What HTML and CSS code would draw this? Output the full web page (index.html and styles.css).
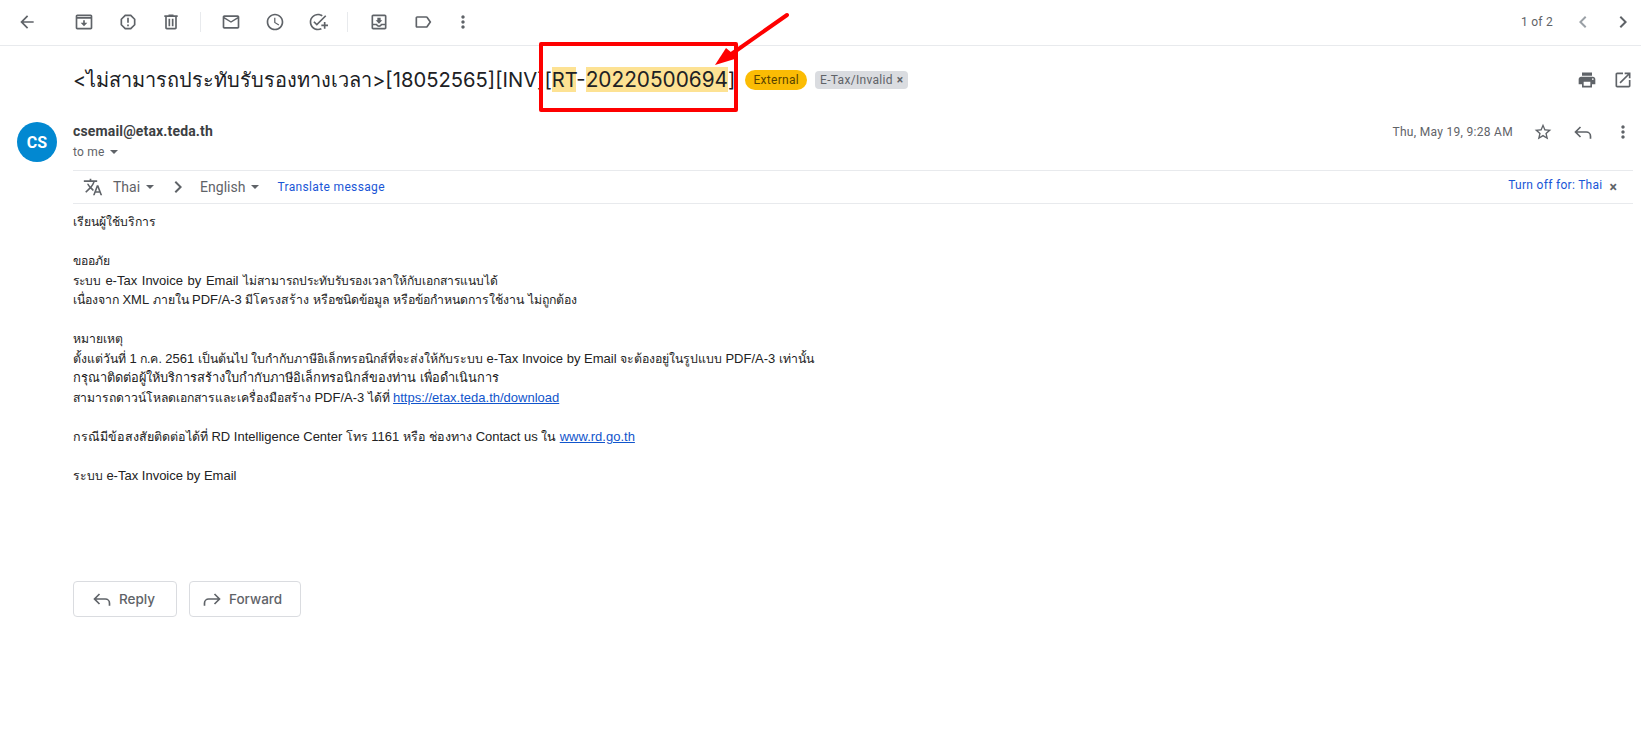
FILE: index.html
```html
<!DOCTYPE html>
<html lang="en">
<head>
<meta charset="utf-8">
<title>Mail</title>
<link rel="stylesheet" href="styles.css">
</head>
<body>
<svg class="sprite" width="0" height="0">
  <defs>
    <symbol id="i-back" viewBox="0 0 24 24"><path d="M20 11H7.83l5.59-5.59L12 4l-8 8 8 8 1.41-1.41L7.83 13H20v-2z"/></symbol>
    <symbol id="i-archive" viewBox="0 0 24 24"><path d="M20 3H4c-1.1 0-2 .9-2 2v14c0 1.1.9 2 2 2h16c1.1 0 2-.9 2-2V5c0-1.1-.9-2-2-2zm0 16H4V8h16v11zM20 6H4V5h16v1zM16 13h-3v-3h-2v3H8l4 4z"/></symbol>
    <symbol id="i-spam" viewBox="0 0 24 24"><path d="M15.73 3H8.27L3 8.27v7.46L8.27 21h7.46L21 15.73V8.27L15.73 3zM19 14.9L14.9 19H9.1L5 14.9V9.1L9.1 5h5.8L19 9.1v5.8zM11 7h2v6h-2zM11 15h2v2h-2z"/></symbol>
    <symbol id="i-delete" viewBox="0 0 24 24"><path d="M15 4V3H9v1H4v2h1v13c0 1.1.9 2 2 2h10c1.1 0 2-.9 2-2V6h1V4h-5zm2 15H7V6h10v13zM9 8h2v9H9zm4 0h2v9h-2z"/></symbol>
    <symbol id="i-mail" viewBox="0 0 24 24"><path d="M20 4H4c-1.1 0-2 .9-2 2v12c0 1.1.9 2 2 2h16c1.1 0 2-.9 2-2V6c0-1.1-.9-2-2-2zm0 14H4V8l8 5 8-5v10zm-8-7L4 6h16l-8 5z"/></symbol>
    <symbol id="i-clock" viewBox="0 0 24 24"><path d="M11.99 2C6.47 2 2 6.48 2 12s4.47 10 9.99 10C17.52 22 22 17.52 22 12S17.52 2 11.99 2zM12 20c-4.42 0-8-3.58-8-8s3.58-8 8-8 8 3.58 8 8-3.58 8-8 8zm.5-13H11v6l5.25 3.15.75-1.23-4.5-2.67z"/></symbol>
    <symbol id="i-task" viewBox="0 0 24 24"><path d="M22 5.18L10.59 16.6l-4.24-4.24 1.41-1.41 2.83 2.83 10-10L22 5.18zM12 20c-4.41 0-8-3.59-8-8s3.59-8 8-8c1.57 0 3.04.46 4.28 1.25l1.45-1.45C16.1 2.67 14.13 2 12 2 6.48 2 2 6.48 2 12s4.48 10 10 10c1.73 0 3.36-.44 4.78-1.22l-1.5-1.5c-1 .46-2.11.72-3.28.72zm7-5h-3v2h3v3h2v-3h3v-2h-3v-3h-2v3z"/></symbol>
    <symbol id="i-move" viewBox="0 0 24 24"><path d="M19 3H5c-1.1 0-2 .9-2 2v14c0 1.1.9 2 2 2h14c1.1 0 2-.9 2-2V5c0-1.1-.9-2-2-2zm0 16H5v-3h3.56c.69 1.19 1.97 2 3.45 2s2.75-.81 3.45-2H19v3zm0-5h-4.99c0 1.1-.9 2-2 2s-2-.9-2-2H5V5h14v9zM16 10h-2V7h-4v3H8l4 4z"/></symbol>
    <symbol id="i-label" viewBox="0 0 24 24"><path d="M17.63 5.84C17.27 5.33 16.67 5 16 5L5 5.01C3.9 5.01 3 5.9 3 7v10c0 1.1.9 1.99 2 1.99L16 19c.67 0 1.27-.33 1.63-.84L22 12l-4.37-6.16zM16 17H5V7h11l3.55 5L16 17z"/></symbol>
    <symbol id="i-more" viewBox="0 0 24 24"><path d="M12 8c1.1 0 2-.9 2-2s-.9-2-2-2-2 .9-2 2 .9 2 2 2zm0 2c-1.1 0-2 .9-2 2s.9 2 2 2 2-.9 2-2-.9-2-2-2zm0 6c-1.1 0-2 .9-2 2s.9 2 2 2 2-.9 2-2-.9-2-2-2z"/></symbol>
    <symbol id="i-left" viewBox="0 0 24 24"><path d="M15.41 7.41L14 6l-6 6 6 6 1.41-1.41L10.83 12z"/></symbol>
    <symbol id="i-right" viewBox="0 0 24 24"><path d="M10 6L8.59 7.41 13.17 12l-4.58 4.59L10 18l6-6z"/></symbol>
    <symbol id="i-print" viewBox="0 0 24 24"><path d="M19 8H5c-1.66 0-3 1.34-3 3v6h4v4h12v-4h4v-6c0-1.66-1.34-3-3-3zm-3 11H8v-5h8v5zm3-7c-.55 0-1-.45-1-1s.45-1 1-1 1 .45 1 1-.45 1-1 1zm-1-9H6v4h12V3z"/></symbol>
    <symbol id="i-open" viewBox="0 0 24 24"><path d="M19 19H5V5h7V3H5c-1.11 0-2 .9-2 2v14c0 1.1.89 2 2 2h14c1.1 0 2-.9 2-2v-7h-2v7zM14 3v2h3.59l-9.83 9.83 1.41 1.41L19 6.41V10h2V3h-7z"/></symbol>
    <symbol id="i-star" viewBox="0 0 24 24"><path d="M22 9.24l-7.19-.62L12 2 9.19 8.63 2 9.24l5.46 4.73L5.82 21 12 17.27 18.18 21l-1.63-7.03L22 9.24zM12 15.4l-3.76 2.27 1-4.28-3.32-2.88 4.38-.38L12 6.1l1.71 4.04 4.38.38-3.32 2.88 1 4.28L12 15.4z"/></symbol>
    <symbol id="i-reply" viewBox="0 0 24 24"><path fill="none" stroke="currentColor" stroke-width="2" d="M9 6l-6 6 6 6M3 12h13a5 5 0 0 1 5 5v3"/></symbol>
    <symbol id="i-forward" viewBox="0 0 24 24"><path fill="none" stroke="currentColor" stroke-width="2" d="M15 6l6 6-6 6M21 12H8a5 5 0 0 0-5 5v3"/></symbol>
    <symbol id="i-translate" viewBox="0 0 24 24"><path d="M12.87 15.07l-2.54-2.51.03-.03c1.74-1.94 2.98-4.17 3.71-6.53H17V4h-7V2H8v2H1v1.99h11.17C11.5 7.92 10.44 9.75 9 11.35 8.07 10.32 7.3 9.19 6.69 8h-2c.73 1.63 1.73 3.17 2.98 4.56l-5.09 5.02L4 19l5-5 3.11 3.11.76-2.04zM18.5 10h-2L12 22h2l1.12-3h4.75L21 22h2l-4.5-12zm-2.62 7l1.62-4.33L19.12 17h-3.24z"/></symbol>
  </defs>
</svg>

<div class="app">
  <header class="toolbar">
    <button class="tb tb-back"><svg class="ic"><use href="#i-back"/></svg></button>
    <div class="tb-group tb-group-first">
      <button class="tb"><svg class="ic"><use href="#i-archive"/></svg></button>
      <button class="tb"><svg class="ic"><use href="#i-spam"/></svg></button>
      <button class="tb"><svg class="ic"><use href="#i-delete"/></svg></button>
    </div>
    <span class="tb-div"></span>
    <div class="tb-group">
      <button class="tb"><svg class="ic"><use href="#i-mail"/></svg></button>
      <button class="tb"><svg class="ic"><use href="#i-clock"/></svg></button>
      <button class="tb"><svg class="ic"><use href="#i-task"/></svg></button>
    </div>
    <span class="tb-div"></span>
    <div class="tb-group tb-group-last">
      <button class="tb"><svg class="ic"><use href="#i-move"/></svg></button>
      <button class="tb"><svg class="ic"><use href="#i-label"/></svg></button>
      <button class="tb tb-more"><svg class="ic"><use href="#i-more"/></svg></button>
    </div>
    <div class="pager">
      <span class="pager-text">1 of 2</span>
      <button class="pg pg-dim"><svg class="ic ic-pg"><use href="#i-left"/></svg></button>
      <button class="pg"><svg class="ic ic-pg"><use href="#i-right"/></svg></button>
    </div>
  </header>

  <div class="subject-row">
    <h1 class="subject"><span class="subject-th">&lt;ไม่สามารถประทับรับรองทางเวลา&gt;</span>[18052565][INV][<mark>RT</mark>-<mark class="subject-num">20220500694</mark>]</h1>
    <span class="chip chip-ext">External</span>
    <span class="chip chip-label">E-Tax/Invalid <b class="chip-x">×</b></span>
    <div class="subject-actions">
      <svg class="ic"><use href="#i-print"/></svg>
      <svg class="ic"><use href="#i-open"/></svg>
    </div>
  </div>

  <section class="message">
    <div class="avatar">CS</div>
    <div class="msg-main">
      <div class="msg-head">
        <div class="who">
          <div class="sender">csemail@etax.teda.th</div>
          <div class="tome">to me <i class="caret"></i></div>
        </div>
        <div class="msg-meta">
          <span class="date">Thu, May 19, 9:28 AM</span>
          <svg class="ic"><use href="#i-star"/></svg>
          <svg class="ic"><use href="#i-reply"/></svg>
          <svg class="ic"><use href="#i-more"/></svg>
        </div>
      </div>
      <div class="translate">
        <svg class="ic ic-tr"><use href="#i-translate"/></svg>
        <span class="lang lang-from">Thai <i class="caret"></i></span>
        <svg class="ic ic-chev"><use href="#i-right"/></svg>
        <span class="lang">English <i class="caret"></i></span>
        <a class="tr-link">Translate message</a>
        <a class="tr-off">Turn off for: Thai</a>
        <b class="tr-x">×</b>
      </div>
      <div class="body">
        <p>เรียนผู้ใช้บริการ</p>
        <p>ขออภัย<br><span class="t-121">ระบบ <span class="la">e-Tax Invoice by Email</span> ไม่สามารถประทับรับรองเวลาให้กับเอกสารแนบได้</span><br><span class="t-123">เนื่องจาก <span class="la">XML</span> ภายใน <span class="la">PDF/A-3</span> มีโครงสร้าง หรือชนิดข้อมูล หรือข้อกำหนดการใช้งาน ไม่ถูกต้อง</span></p>
        <p>หมายเหตุ<br><span class="t-123">ตั้งแต่วันที่ <span class="la">1</span> ก.ค. <span class="la">2561</span> เป็นต้นไป ใบกำกับภาษีอิเล็กทรอนิกส์ที่จะส่งให้กับระบบ <span class="la">e-Tax Invoice by Email</span> จะต้องอยู่ในรูปแบบ <span class="la">PDF/A-3</span> เท่านั้น</span><br><span class="t-128">กรุณาติดต่อผู้ให้บริการสร้างใบกำกับภาษีอิเล็กทรอนิกส์ของท่าน เพื่อดำเนินการ</span><br>สามารถดาวน์โหลดเอกสารและเครื่องมือสร้าง <span class="la">PDF/A-3</span> ได้ที่ <a class="lnk la">https://etax.teda.th/download</a></p>
        <p><span class="t-125">กรณีมีข้อสงสัยติดต่อได้ที่ <span class="la">RD Intelligence Center</span> โทร <span class="la">1161</span> หรือ ช่องทาง <span class="la">Contact us</span> ใน <a class="lnk la">www.rd.go.th</a></span></p>
        <p>ระบบ <span class="la">e-Tax Invoice by Email</span></p>
      </div>
      <div class="actions">
        <button class="act act-reply"><svg class="ic ic-act"><use href="#i-reply"/></svg>Reply</button>
        <button class="act act-fwd"><svg class="ic ic-act"><use href="#i-forward"/></svg>Forward</button>
      </div>
    </div>
  </section>
</div>

<svg class="annot" width="1641" height="736" viewBox="0 0 1641 736">
  <rect x="541" y="44" width="195" height="66" fill="none" stroke="#fe0000" stroke-width="4" stroke-linejoin="round"/>
  <path d="M787 15L730 55" stroke="#fe0000" stroke-width="4" stroke-linecap="round" fill="none"/>
  <path d="M715 65L726 48L738 58z" fill="#fe0000"/>
</svg>
</body>
</html>
```
FILE: styles.css
```css
* { box-sizing: border-box; }
html, body { margin: 0; padding: 0; background: #fff; }
body { width: 1641px; height: 736px; overflow: hidden; position: relative; font-family: Roboto, "Noto Sans", sans-serif; color: #202124; }
.sprite { position: absolute; }
.ic { width: 20px; height: 20px; fill: #5f6368; color: #5f6368; display: block; flex: none; }
button { border: 0; background: none; padding: 0; font: inherit; }

.toolbar { height: 46px; border-bottom: 1px solid #e8eaed; display: flex; align-items: center; padding-left: 17px; padding-bottom: 1px; }
.tb { width: 20px; height: 20px; display: block; flex: none; }
.tb-group { display: flex; gap: 23.5px; }
.tb-group-first { margin-left: 37px; }
.tb-group-last { margin-left: 1px; }
.tb-div { width: 1px; height: 20px; background: #e8eaed; margin: 0 20px 0 19px; }
.tb-more { margin-left: -3px; }
.pager { margin-left: auto; display: flex; align-items: center; padding-right: 6px; }
.pager-text { font-size: 12px; letter-spacing: .25px; color: #5f6368; margin-right: 18px; }
.pg { width: 24px; height: 24px; display: block; flex: none; }
.ic-pg { width: 24px; height: 24px; }
.pg + .pg { margin-left: 16px; }
.pg-dim .ic { fill: #9aa0a6; }

.subject-row { height: 68px; display: flex; align-items: center; padding-left: 73px; padding-right: 8px; }
.subject { margin: 0; font-family: Inter, Roboto, sans-serif; font-weight: 400; font-size: 20.2px; line-height: 28px; color: #202124; white-space: nowrap; }
.subject-th { font-size: 19.9px; }
.subject mark { background: #fde293; color: inherit; }
.subject .subject-num { font-size: 20.8px; }
.chip { display: inline-flex; align-items: center; font-size: 12px; letter-spacing: .3px; white-space: nowrap; }
.chip-ext { height: 20px; margin-left: 10px; padding: 0 8px; background: #fbbc04; color: #594300; border-radius: 10px; }
.chip-label { height: 18px; margin-left: 8px; padding: 0 5px; background: #dadce0; color: #5f6368; border-radius: 4px; }
.chip-x { margin-left: 4px; font-weight: 700; font-size: 12px; }
.subject-actions { margin-left: auto; display: flex; gap: 16px; }

.message { display: flex; padding: 8px 8px 0 17px; }
.avatar { width: 40px; height: 40px; border-radius: 50%; background: #0288d1; color: #fff; font-weight: 700; font-size: 16px; display: flex; align-items: center; justify-content: center; flex: none; }
.msg-main { margin-left: 16px; flex: 1; min-width: 0; }
.msg-head { height: 48px; display: flex; justify-content: space-between; }
.sender { font-size: 14px; font-weight: 700; line-height: 20px; letter-spacing: .15px; margin-top: -1px; color: #3c4043; }
.tome { font-size: 12px; line-height: 20px; letter-spacing: .2px; color: #5f6368; margin-top: 1px; display: flex; align-items: center; gap: 5px; }
.caret { width: 0; height: 0; border: 4px solid transparent; border-top-color: #5f6368; border-bottom: 0; display: inline-block; }
.msg-meta { display: flex; align-items: flex-start; }
.msg-meta .date { font-size: 12px; line-height: 20px; letter-spacing: .3px; color: #5f6368; margin-right: 20px; }
.msg-meta .ic { margin-right: 20px; }
.msg-meta .ic:last-child { margin-right: 0; }

.translate { height: 34px; border-top: 1px solid #e8eaed; border-bottom: 1px solid #e8eaed; display: flex; align-items: center; padding-left: 10px; font-size: 14px; color: #5f6368; }
.lang { display: inline-flex; align-items: center; gap: 6px; }
.lang-from { margin-left: 10px; }
.ic-chev { width: 24px; height: 24px; margin: 0 10px 0 12px; }
.tr-link, .tr-off { font-size: 12px; letter-spacing: .3px; color: #1a56d6; }
.tr-link { margin-left: 18px; letter-spacing: .35px; }
.tr-off { margin-left: auto; margin-top: -4px; }
.tr-x { margin: 0 16px 0 7px; font-size: 14px; color: #5f6368; }

.body { font-family: "Liberation Sans", Arial, sans-serif; font-size: 12.2px; line-height: 19.5px; color: #222; padding-top: 9px; }
.body p { margin: 0 0 19.5px; }
.t-121 { font-size: 12.1px; word-spacing: 1px; line-height: 1; }
.t-123 { font-size: 12.3px; line-height: 1; }
.t-125 { font-size: 12.5px; line-height: 1; }
.t-128 { font-size: 12.8px; line-height: 1; }
.la { font-size: 13px; line-height: 1; }
.lnk { color: #1155cc; text-decoration: underline; }

.actions { display: flex; gap: 12px; margin-top: 95px; }
.act { height: 36px; border: 1px solid #dadce0; border-radius: 4px; display: flex; align-items: center; gap: 7px; font-family: Inter, Roboto, sans-serif; font-size: 13.5px; font-weight: 500; color: #5f6368; padding-left: 18px; }
.act-reply { width: 104px; }
.act-fwd { width: 112px; padding-left: 12px; }
.annot { position: absolute; left: 0; top: 0; pointer-events: none; }
```
